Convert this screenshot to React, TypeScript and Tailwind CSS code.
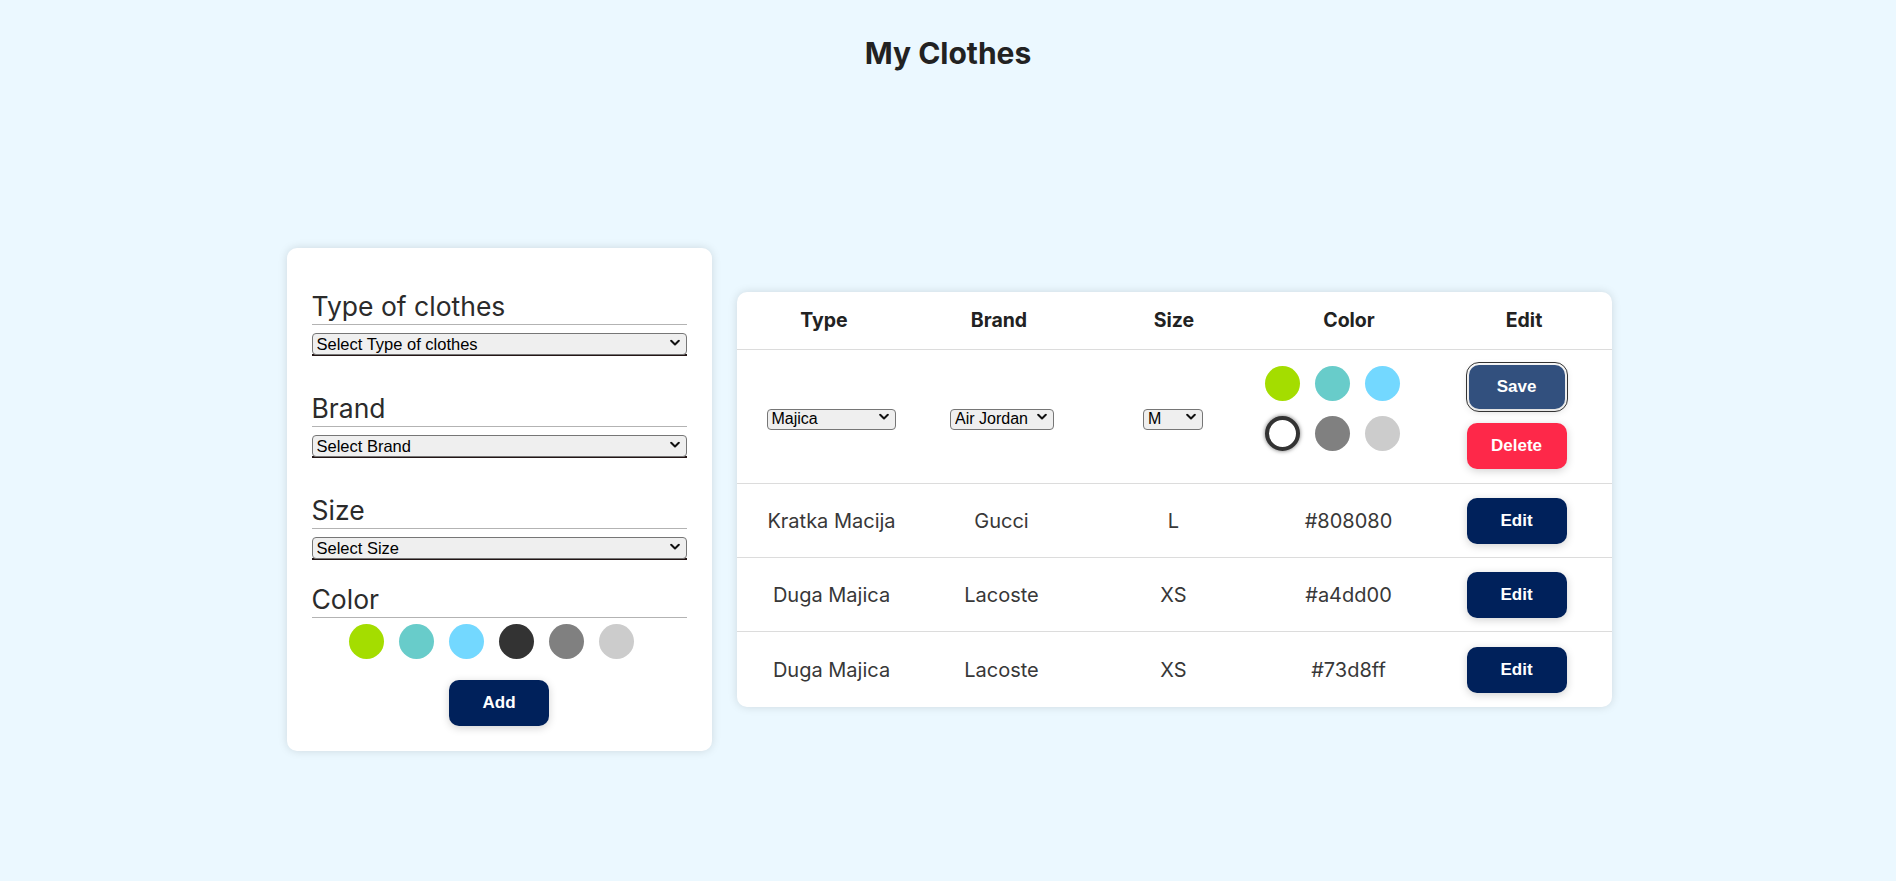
import React, { useState } from "react";

const COLORS = ["#a4dd00", "#68ccca", "#73d8ff", "#333333", "#808080", "#cccccc"];

const Chevron = () => (
  <svg width="10" height="7" viewBox="0 0 10 7" className="pointer-events-none absolute right-[7px] top-1/2 -translate-y-1/2">
    <polyline points="1.2,1.2 5,5 8.8,1.2" fill="none" stroke="#111" strokeWidth="2" strokeLinecap="round" strokeLinejoin="round" />
  </svg>
);

// select nativo con estilo tipo chrome
const Select = ({ value, options, className }: { value: string; options: string[]; className: string }) => (
  <div className={`relative ${className}`}>
    <select
      defaultValue={value}
      className="h-full w-full appearance-none rounded-[4px] border border-[#767676] bg-[#efefef] pl-[4px] pr-[20px] font-['Liberation_Sans',Arial,sans-serif] leading-none text-black outline-none"
    >
      {options.map((o) => (
        <option key={o}>{o}</option>
      ))}
    </select>
    <Chevron />
  </div>
);

const FormSelect = ({ placeholder }: { placeholder: string }) => (
  <div className="mt-[7px] border-b-2 border-[#231515]">
    <Select value={placeholder} options={[placeholder]} className="h-[22px] text-[16.5px]" />
  </div>
);

const Label = ({ text, className = "" }: { text: string; className?: string }) => (
  <h2 className={`border-b border-[#b3b3b3] pb-[2px] text-[26.5px] font-normal leading-[32px] text-[#2b2b2b] ${className}`}>
    {text}
  </h2>
);

const rows = [
  { type: "Kratka Macija", brand: "Gucci", size: "L", color: "#808080" },
  { type: "Duga Majica", brand: "Lacoste", size: "XS", color: "#a4dd00" },
  { type: "Duga Majica", brand: "Lacoste", size: "XS", color: "#73d8ff" },
];

const btn =
  "rounded-[10px] font-['Liberation_Sans',Arial,sans-serif] text-[17px] font-bold text-white shadow-[0_2px_8px_rgba(0,0,0,0.18)]";

export default function App() {
  const [selected, setSelected] = useState(3);

  return (
    <main className="min-h-screen bg-[#ebf8ff] pt-[35px] font-['Inter',sans-serif]">
      <h1 className="text-center text-[30px] font-bold leading-[36px] text-[#222]">My Clothes</h1>

      <div className="mt-[177px] ml-[2px] flex items-center justify-center gap-[25px]">
        {/* formulario */}
        <form className="w-[425px] rounded-[10px] bg-white px-[25px] pt-[42px] pb-[25px] shadow-[0_0_10px_rgba(0,0,0,0.13)]">
          <Label text="Type of clothes" />
          <FormSelect placeholder="Select Type of clothes" />

          <Label text="Brand" className="mt-[36px]" />
          <FormSelect placeholder="Select Brand" />

          <Label text="Size" className="mt-[36px]" />
          <FormSelect placeholder="Select Size" />

          <Label text="Color" className="mt-[23px]" />
          <div className="mt-[6px] flex justify-center">
            {COLORS.map((c) => (
              <span key={c} className="mr-[15px] h-[35px] w-[35px] rounded-full" style={{ backgroundColor: c }} />
            ))}
          </div>

          <div className="mt-[21px] flex justify-center">
            <button type="button" className={`${btn} h-[46px] w-[100px] bg-[#00215b]`}>
              Add
            </button>
          </div>
        </form>

        {/* tabla */}
        <div className="w-[875px] rounded-[10px] bg-white shadow-[0_0_10px_rgba(0,0,0,0.13)]">
          <div className="grid h-[58px] grid-cols-5 items-center border-b border-[#dcdcdc] text-center text-[19.5px] font-bold text-[#222]">
            <span>Type</span>
            <span>Brand</span>
            <span>Size</span>
            <span>Color</span>
            <span>Edit</span>
          </div>

          <div className="grid h-[134px] grid-cols-5 items-center border-b border-[#dcdcdc] pl-[9px] pr-[11px]">
            <div className="flex justify-center">
              <Select value="Majica" options={["Majica", "Kratka Macija", "Duga Majica"]} className="h-[21px] w-[129px] text-[16px]" />
            </div>
            <div className="flex justify-center">
              <Select value="Air Jordan" options={["Air Jordan", "Gucci", "Lacoste"]} className="h-[21px] w-[104px] text-[16px]" />
            </div>
            <div className="flex justify-center">
              <Select value="M" options={["XS", "S", "M", "L", "XL"]} className="h-[21px] w-[60px] text-[16px]" />
            </div>
            <div className="flex pl-[6px] pb-[2px]">
              <div className="flex w-[150px] flex-wrap">
                {COLORS.map((c, i) => (
                  <button
                    key={c}
                    type="button"
                    onClick={() => setSelected(i)}
                    className={`mr-[15px] mb-[15px] h-[35px] w-[35px] rounded-full ${
                      selected === i ? "border-[4px] bg-white shadow-[0_0_4px_rgba(0,0,0,0.55)]" : ""
                    }`}
                    style={selected === i ? { borderColor: c } : { backgroundColor: c }}
                  />
                ))}
              </div>
            </div>
            <div className="flex flex-col items-center pl-[3px]">
              <button
                type="button"
                className={`${btn} h-[44px] w-[96px] bg-[#32507e] outline outline-offset-2 outline-[#333]`}
              >
                Save
              </button>
              <button type="button" className={`${btn} mt-[14px] h-[46px] w-[100px] bg-[#fe2849]`}>
                Delete
              </button>
            </div>
          </div>

          {rows.map((r, i) => (
            <div
              key={i}
              className={`grid grid-cols-[190px_150px_194px_156px_185px] items-center text-center text-[20px] text-[#383838] ${
                i < rows.length - 1 ? "h-[74px] border-b border-[#dcdcdc]" : "h-[75px]"
              }`}
            >
              <span>{r.type}</span>
              <span>{r.brand}</span>
              <span>{r.size}</span>
              <span>{r.color}</span>
              <div className="flex justify-center pr-[5px]">
                <button type="button" className={`${btn} h-[46px] w-[100px] bg-[#00215b]`}>
                  Edit
                </button>
              </div>
            </div>
          ))}
        </div>
      </div>
    </main>
  );
}
